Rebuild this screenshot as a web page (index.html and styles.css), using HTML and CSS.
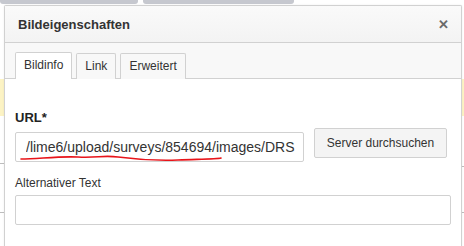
FILE: index.html
```html
<!DOCTYPE html>
<html>
<head>
    <title>Bildeigenschaften</title>
    <link rel="stylesheet" href="styles.css">
</head>
<body>
    <div class="backdrop">
        <div class="bar bar-a"></div>
        <div class="bar bar-b"></div>
        <div class="strip strip-left"></div>
        <div class="strip strip-right"></div>
        <div class="rule rule-1"></div>
        <div class="rule rule-2"></div>
        <div class="rule rule-3"></div>
        <div class="rule rule-4"></div>
    </div>

    <div class="dialog">
        <div class="dialog-title">
            <span>Bildeigenschaften</span>
            <span class="close">&#x2715;</span>
        </div>
        <div class="tabs">
            <div class="tab active">Bildinfo</div>
            <div class="tab">Link</div>
            <div class="tab">Erweitert</div>
        </div>
        <div class="dialog-body">
            <div class="field">
                <label class="label-strong" for="url">URL*</label>
                <div class="url-row">
                    <div class="url-wrap">
                        <input type="text" id="url" class="text-input url-input" value="/lime6/upload/surveys/854694/images/DRS">
                        <svg class="scribble" width="220" height="10" viewBox="0 0 220 10">
                            <path d="M3 5 C 20 5, 40 2, 60 3 S 85 1, 100 3 S 130 7, 160 6 S 200 5, 203 4" fill="none" stroke="#e8141a" stroke-width="1.6" stroke-linecap="round"/>
                        </svg>
                    </div>
                    <button class="btn">Server durchsuchen</button>
                </div>
            </div>
            <div class="field">
                <label for="alt">Alternativer Text</label>
                <input type="text" id="alt" class="text-input alt-input">
            </div>
        </div>
    </div>
</body>
</html>
```

FILE: styles.css
```css
body { margin: 0; width: 464px; height: 246px; overflow: hidden; background: #fff; font-family: "Liberation Sans", Arial, sans-serif; position: relative; }

/* page behind the dialog */
.backdrop .bar { position: absolute; top: 0; height: 4px; background: #c6c8cf; border-radius: 0 0 3px 3px; }
.bar-a { left: 0; width: 138px; }
.bar-b { left: 143px; width: 151px; }
.strip { position: absolute; top: 79px; height: 37px; background: #fcf3c4; }
.strip-left { left: 0; width: 4px; }
.strip-right { left: 462px; width: 2px; }
.rule { position: absolute; height: 1px; background: #bdbdbd; }
.rule-1 { left: 0; top: 163px; width: 4px; }
.rule-2 { left: 0; top: 212px; width: 4px; }
.rule-3 { left: 462px; top: 166px; width: 2px; }
.rule-4 { left: 462px; top: 212px; width: 2px; }

.dialog { position: absolute; left: 4px; top: 5px; width: 456px; height: 241px; overflow: hidden; background: #fff; border: 1px solid #d1d1d1; border-bottom: none; border-radius: 2px 2px 0 0; box-shadow: 0 0 2px rgba(0,0,0,0.08); }

.dialog-title { height: 36px; display: flex; align-items: center; justify-content: space-between; padding: 0 12px 0 13px; background: linear-gradient(#fafafa, #f3f3f3); border-bottom: 1px solid #d1d1d1; font-size: 13px; font-weight: bold; color: #333; }
.close { font-size: 13px; color: #6a6a6a; font-weight: bold; }

.tabs { height: 35px; display: flex; align-items: flex-end; gap: 4px; padding-left: 10px; background: #f8f8f8; border-bottom: 1px solid #d1d1d1; }
.tab { height: 25px; line-height: 25px; padding: 0 8px; margin-bottom: -1px; font-size: 12px; color: #333; background: #f8f8f8; border: 1px solid #d1d1d1; border-bottom: none; border-radius: 2px 2px 0 0; }
.tab.active { background: #fff; height: 26px; }

.dialog-body { padding: 31px 10px 0 10px; }
.field { margin-bottom: 14px; }
label { display: block; font-size: 12px; color: #333; margin-bottom: 5px; }
.label-strong { font-size: 13px; font-weight: bold; color: #222; margin-bottom: 3px; }

.url-row { display: flex; align-items: flex-start; gap: 10px; }
.url-wrap { position: relative; }
.text-input { box-sizing: border-box; height: 30px; border: 1px solid #d1d1d1; border-radius: 2px; background: #fff; font-family: "Liberation Sans", Arial, sans-serif; padding: 0 8px 0 10px; outline: none; }
.url-input { width: 289px; font-size: 14px; color: #333; margin-top: 4px; }
.alt-input { width: 436px; font-size: 13px; }
.scribble { position: absolute; left: 3px; top: 26px; }

.btn { box-sizing: border-box; width: 133px; height: 30px; border: 1px solid #d1d1d1; border-radius: 2px; background: #f4f4f4; font-family: "Liberation Sans", Arial, sans-serif; font-size: 12px; color: #333; }
```
